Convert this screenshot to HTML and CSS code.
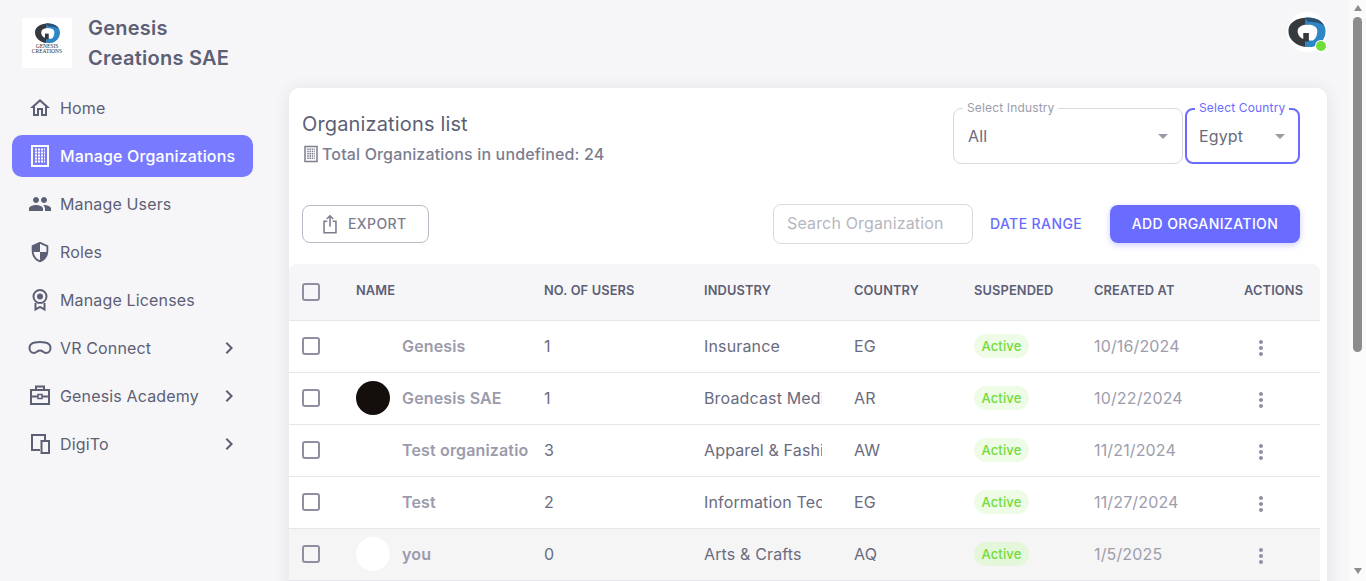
FILE: index.html
```html
<!DOCTYPE html>
<html lang="en">

<head>
    <meta charset="UTF-8">
    <meta name="viewport" content="width=device-width, initial-scale=1.0">
    <title>Manage Organizations</title>
    <link rel="stylesheet" href="styles.css">
</head>

<body>
    <!-- shared icons -->
    <svg class="defs" width="0" height="0">
        <symbol id="i-building" viewBox="0 0 24 24">
            <rect x="4" y="2" width="16" height="20" fill="none" stroke="currentColor" stroke-width="2" />
            <path d="M7 5.5h10M7 8.5h10M7 11.500h10M7 14.500h10M7 17.500h10" fill="none" stroke="currentColor"
                stroke-width="2" stroke-dasharray="2 1" />
        </symbol>
        <symbol id="i-chevron" viewBox="0 0 24 24">
            <path d="M10 6L8.59 7.41 13.17 12l-4.58 4.59L10 18l6-6z" fill="currentColor" />
        </symbol>
        <symbol id="i-more" viewBox="0 0 24 24">
            <path fill="currentColor"
                d="M12 8c1.100 0 2-.9 2-2s-.9-2-2-2-2 .9-2 2 .9 2 2 2zm0 2c-1.100 0-2 .9-2 2s.9 2 2 2 2-.9 2-2-.9-2-2-2zm0 6c-1.100 0-2 .9-2 2s.9 2 2 2 2-.9 2-2-.9-2-2-2z" />
        </symbol>
        <symbol id="i-logo" viewBox="0 0 40 32">
            <path d="M22 1C10 0 0 6 0 15c0 9 9 16 18 17l1-8c-5 0-9-4-9-9s6-7 12-7z" fill="#36393d" />
            <path d="M18 1c10-2 22 4 22 14 0 8-6 16-15 17h-7v-7h8c3-1 5-5 5-10 0-5-5-7-13-7z" fill="#2f86c6" />
            <path d="M17 1c8-1 18 1 21 8-5-3-10-4-17-4z" fill="#2c4f70" />
            <path d="M16 17h6v9h-6z" fill="#36393d" />
        </symbol>
    </svg>

    <div class="app">
        <aside class="sidebar">
            <div class="brand">
                <div class="brand-logo">
                    <svg class="brand-mark" viewBox="0 0 40 32">
                        <use href="#i-logo" />
                    </svg>
                    <span class="brand-small">Genesis<br>Creations</span>
                </div>
                <div class="brand-name">Genesis Creations SAE</div>
            </div>

            <nav class="nav">
                <a class="nav-item" href="#">
                    <svg class="icon" viewBox="0 0 24 24">
                        <path fill="currentColor"
                            d="M12 5.690l5 4.500V18h-2v-6H9v6H7v-7.810l5-4.500M12 3L2 12h3v8h6v-6h2v6h6v-8h3L12 3z" />
                    </svg>
                    Home
                </a>
                <a class="nav-item active" href="#">
                    <svg class="icon">
                        <use href="#i-building" />
                    </svg>
                    Manage Organizations
                </a>
                <a class="nav-item" href="#">
                    <svg class="icon" viewBox="0 0 24 24">
                        <path fill="currentColor"
                            d="M16 11c1.660 0 2.990-1.340 2.990-3S17.660 5 16 5c-1.660 0-3 1.340-3 3s1.340 3 3 3zm-8 0c1.660 0 2.990-1.340 2.990-3S9.660 5 8 5C6.340 5 5 6.340 5 8s1.340 3 3 3zm0 2c-2.330 0-7 1.170-7 3.500V19h14v-2.500c0-2.330-4.670-3.500-7-3.500zm8 0c-.29 0-.62.02-.97.05 1.160.84 1.970 1.970 1.970 3.450V19h6v-2.500c0-2.330-4.670-3.500-7-3.500z" />
                    </svg>
                    Manage Users
                </a>
                <a class="nav-item" href="#">
                    <svg class="icon" viewBox="-1 -1 26 26">
                        <path fill="currentColor" fill-rule="evenodd"
                            d="M12 1L3 5v6c0 5.550 3.840 10.740 9 12 5.160-1.260 9-6.450 9-12V5l-9-4zm0 2.190l7 3.110V12h-7V3.190zM5 12h7v8.930C8.280 19.780 5.530 16.110 5 12z" />
                    </svg>
                    Roles
                </a>
                <a class="nav-item" href="#">
                    <svg class="icon" viewBox="0 0 24 24">
                        <circle cx="12" cy="8.500" r="6.500" fill="none" stroke="currentColor" stroke-width="2" />
                        <circle cx="12" cy="8.500" r="3" fill="currentColor" />
                        <path d="M7.500 15v6.500l4.500-2.500 4.500 2.500V15" fill="none" stroke="currentColor" stroke-width="2" />
                    </svg>
                    Manage Licenses
                </a>
                <a class="nav-item" href="#">
                    <svg class="icon" viewBox="0 0 24 24">
                        <path d="M7 6.500c3-.6 7-.6 10 0 3.200.6 5.500 2.500 5.500 5.500 0 2.800-2 5-4.500 5-2.600 0-3.200-2.500-6-2.500s-3.400 2.500-6 2.500c-2.500 0-4.500-2.200-4.500-5 0-3 2.300-4.900 5.500-5.500z"
                            fill="none" stroke="currentColor" stroke-width="2" />
                    </svg>
                    VR Connect
                    <svg class="icon chevron">
                        <use href="#i-chevron" />
                    </svg>
                </a>
                <a class="nav-item" href="#">
                    <svg class="icon" viewBox="0 0 24 24">
                        <rect x="3" y="6" width="18" height="14" fill="none" stroke="currentColor" stroke-width="2" />
                        <path d="M8 6V2.500h8V6M3 12.500h18" fill="none" stroke="currentColor" stroke-width="2" />
                        <rect x="10" y="10.500" width="4" height="4" fill="#f6f6f9" stroke="currentColor" stroke-width="1.500" />
                    </svg>
                    Genesis Academy
                    <svg class="icon chevron">
                        <use href="#i-chevron" />
                    </svg>
                </a>
                <a class="nav-item" href="#">
                    <svg class="icon" viewBox="0 0 24 24">
                        <path d="M12 18H4V3h13v5" fill="none" stroke="currentColor" stroke-width="2" />
                        <rect x="13.500" y="9" width="7.500" height="12" fill="none" stroke="currentColor" stroke-width="2" />
                    </svg>
                    DigiTo
                    <svg class="icon chevron">
                        <use href="#i-chevron" />
                    </svg>
                </a>
            </nav>
        </aside>

        <main class="main">
            <div class="topbar">
                <div class="avatar-wrap">
                    <svg class="avatar-logo" viewBox="0 0 40 32">
                        <use href="#i-logo" />
                    </svg>
                    <span class="status-dot"></span>
                </div>
            </div>

            <section class="card">
                <div class="card-head">
                    <div>
                        <h1 class="card-title">Organizations list</h1>
                        <p class="card-sub">
                            <svg class="icon-small">
                                <use href="#i-building" />
                            </svg>
                            Total Organizations in undefined: 24
                        </p>
                    </div>
                    <div class="filters">
                        <div class="select select-industry">
                            <label class="select-label">Select Industry</label>
                            <span>All</span>
                            <i class="caret"></i>
                        </div>
                        <div class="select select-country">
                            <label class="select-label">Select Country</label>
                            <span>Egypt</span>
                            <i class="caret"></i>
                        </div>
                    </div>
                </div>

                <div class="toolbar">
                    <button class="btn-export">
                        <svg class="icon-export" viewBox="0 0 24 24">
                            <path d="M9 9H5.500v12.500h13V9H15M12 15V3M8.500 6.500L12 3l3.500 3.500" fill="none" stroke="currentColor" stroke-width="1.700" />
                        </svg>
                        EXPORT
                    </button>
                    <input class="search" type="text" placeholder="Search Organization">
                    <button class="btn-text">DATE RANGE</button>
                    <button class="btn-add">ADD ORGANIZATION</button>
                </div>

                <table class="table">
                    <thead>
                        <tr>
                            <th class="col-check"><input class="check" type="checkbox"></th>
                            <th class="col-name">NAME</th>
                            <th class="col-users">NO. OF USERS</th>
                            <th class="col-industry">INDUSTRY</th>
                            <th class="col-country">COUNTRY</th>
                            <th class="col-status">SUSPENDED</th>
                            <th class="col-date">CREATED AT</th>
                            <th>ACTIONS</th>
                        </tr>
                    </thead>
                    <tbody>
                        <tr>
                            <td><input class="check" type="checkbox"></td>
                            <td><div class="org"><span class="org-pic"></span><span class="org-name">Genesis</span></div></td>
                            <td>1</td>
                            <td><div class="clip">Insurance</div></td>
                            <td>EG</td>
                            <td><span class="chip">Active</span></td>
                            <td class="date">10/16/2024</td>
                            <td><svg class="more"><use href="#i-more" /></svg></td>
                        </tr>
                        <tr>
                            <td><input class="check" type="checkbox"></td>
                            <td><div class="org"><span class="org-pic pic-dark"></span><span class="org-name">Genesis SAE</span></div></td>
                            <td>1</td>
                            <td><div class="clip">Broadcast Media</div></td>
                            <td>AR</td>
                            <td><span class="chip">Active</span></td>
                            <td class="date">10/22/2024</td>
                            <td><svg class="more"><use href="#i-more" /></svg></td>
                        </tr>
                        <tr>
                            <td><input class="check" type="checkbox"></td>
                            <td><div class="org"><span class="org-pic"></span><span class="org-name">Test organization</span></div></td>
                            <td>3</td>
                            <td><div class="clip">Apparel &amp; Fashion</div></td>
                            <td>AW</td>
                            <td><span class="chip">Active</span></td>
                            <td class="date">11/21/2024</td>
                            <td><svg class="more"><use href="#i-more" /></svg></td>
                        </tr>
                        <tr>
                            <td><input class="check" type="checkbox"></td>
                            <td><div class="org"><span class="org-pic"></span><span class="org-name">Test</span></div></td>
                            <td>2</td>
                            <td><div class="clip">Information Technology</div></td>
                            <td>EG</td>
                            <td><span class="chip">Active</span></td>
                            <td class="date">11/27/2024</td>
                            <td><svg class="more"><use href="#i-more" /></svg></td>
                        </tr>
                        <tr class="hovered">
                            <td><input class="check" type="checkbox"></td>
                            <td><div class="org"><span class="org-pic pic-white"></span><span class="org-name">you</span></div></td>
                            <td>0</td>
                            <td><div class="clip">Arts &amp; Crafts</div></td>
                            <td>AQ</td>
                            <td><span class="chip">Active</span></td>
                            <td class="date">1/5/2025</td>
                            <td><svg class="more"><use href="#i-more" /></svg></td>
                        </tr>
                    </tbody>
                </table>
            </section>
        </main>

        <!-- page scrollbar -->
        <div class="scrollbar">
            <i class="arrow-up"></i>
            <div class="thumb"></div>
            <i class="arrow-down"></i>
        </div>
    </div>
</body>

</html>
```

FILE: styles.css
```css
* {
    box-sizing: border-box;
}

body {
    margin: 0;
    height: 100vh;
    overflow: hidden;
    background-color: #f6f6f9;
    color: #5d5f75;
    font-family: "Inter", "Liberation Sans", sans-serif;
    font-size: 16px;
    letter-spacing: 0.15px;
}

.defs {
    display: none;
}

.app {
    display: flex;
    height: 100%;
}

/* sidebar */
.sidebar {
    width: 265px;
    flex-shrink: 0;
}

.brand {
    display: flex;
    align-items: center;
    gap: 16px;
    padding: 13px 0 0 22px;
}

.brand-logo {
    width: 50px;
    height: 50px;
    flex-shrink: 0;
    background-color: #fff;
    display: flex;
    flex-direction: column;
    align-items: center;
    padding-top: 5px;
}

.brand-mark {
    width: 25px;
    height: 20px;
}

.brand-small {
    margin-top: 1px;
    font-family: "Liberation Serif", serif;
    font-size: 5.500px;
    letter-spacing: 0;
    line-height: 5px;
    text-align: center;
    text-transform: uppercase;
    color: #2c2c30;
}

.brand-name {
    width: 160px;
    font-size: 20px;
    font-weight: 600;
    letter-spacing: 0.25px;
    line-height: 30px;
}

.nav {
    display: flex;
    flex-direction: column;
    gap: 6px;
    margin: 14px 0 0 12px;
    width: 241px;
}

.nav-item {
    display: flex;
    align-items: center;
    gap: 8px;
    height: 42px;
    padding: 0 12px 0 16px;
    border-radius: 10px;
    color: #5d5f75;
    text-decoration: none;
}

.nav-item.active {
    background-color: #787bff;
    color: #fff;
    font-weight: 500;
}

.icon {
    width: 24px;
    height: 24px;
    flex-shrink: 0;
}

.chevron {
    margin-left: auto;
}

/* main */
.main {
    flex: 1;
    min-width: 0;
    padding-left: 24px;
    padding-right: 22px;
    overflow: hidden;
}

.topbar {
    display: flex;
    justify-content: flex-end;
    height: 88px;
    padding-top: 12px;
}

.avatar-wrap {
    position: relative;
    display: flex;
    align-items: center;
    justify-content: center;
    width: 40px;
    height: 40px;
    border-radius: 50%;
    background-color: #fff;
}

.avatar-logo {
    width: 38px;
    height: 30px;
}

.status-dot {
    position: absolute;
    right: 1px;
    bottom: 1px;
    width: 10px;
    height: 10px;
    border-radius: 50%;
    background-color: #71dd37;
    box-shadow: 0 0 0 1px #fff;
}

.card {
    background-color: #fff;
    border-radius: 10px;
    padding-top: 20px;
    padding-bottom: 40px;
    box-shadow: 0 2px 16px rgba(67, 67, 90, 0.12);
}

.card-head {
    display: flex;
    justify-content: space-between;
    padding: 0 27px 0 13px;
    height: 56px;
}

.card-title {
    margin: 0;
    font-size: 20px;
    font-weight: 400;
    line-height: 32px;
}

.card-sub {
    margin: 4px 0 0;
    display: flex;
    align-items: center;
    gap: 2px;
    font-weight: 500;
    line-height: 20px;
    color: #7c7d8f;
}

.icon-small {
    width: 18px;
    height: 18px;
}

.filters {
    display: flex;
    gap: 2px;
}

.select {
    position: relative;
    display: flex;
    align-items: center;
    justify-content: space-between;
    height: 56px;
    padding: 0 14px;
    border: 1px solid #d9d9de;
    border-radius: 8px;
    color: #6a6b7e;
}

.select-industry {
    width: 230px;
}

.select-country {
    width: 115px;
    border: 2px solid #696cff;
    padding: 0 13px 0 12px;
}

.select-label {
    position: absolute;
    top: -9px;
    left: 9px;
    padding: 0 4px;
    background-color: #fff;
    font-size: 12px;
    line-height: 15px;
    color: #9c9cab;
}

.select-country .select-label {
    left: 8px;
    top: -10px;
    color: #696cff;
}

.caret {
    width: 0;
    height: 0;
    border-left: 5px solid transparent;
    border-right: 5px solid transparent;
    border-top: 5px solid #9a9aa8;
}

.toolbar {
    display: flex;
    align-items: center;
    height: 40px;
    margin-top: 40px;
    padding: 0 27px 0 13px;
}

.toolbar button {
    font-family: inherit;
    font-size: 14px;
    font-weight: 500;
    letter-spacing: 0.4px;
    line-height: 16px;
    padding-bottom: 1px;
    cursor: pointer;
}

.btn-export {
    display: flex;
    align-items: center;
    gap: 7px;
    width: 127px;
    height: 38px;
    padding: 0 0 0 16px;
    background: none;
    border: 1px solid #b9b9c6;
    border-radius: 8px;
    color: #7c7d8f;
}

.icon-export {
    width: 22px;
    height: 22px;
}

.search {
    width: 200px;
    height: 40px;
    margin-left: auto;
    padding: 0 14px 2px 13px;
    border: 1px solid #d9d9de;
    border-radius: 8px;
    font-family: inherit;
    font-size: 16px;
    letter-spacing: 0.15px;
}

.search::placeholder {
    color: #b6b6c1;
}

.btn-text {
    width: 91px;
    margin-left: 17px;
    padding: 0;
    background: none;
    border: none;
    color: #696cff;
    white-space: nowrap;
}

.btn-add {
    width: 190px;
    height: 38px;
    margin-left: 29px;
    background-color: #696cff;
    border: none;
    border-radius: 8px;
    color: #fff;
    box-shadow: 0 2px 6px rgba(105, 108, 255, 0.35);
}

/* table */
.table {
    width: 1031px;
    margin-top: 20px;
    table-layout: fixed;
    border-collapse: collapse;
}

.table thead tr {
    height: 56px;
    background-color: #f6f6f9;
}

.table th {
    padding: 0 0 3px;
    font-size: 12.800px;
    font-weight: 600;
    text-align: left;
    color: #5d5f75;
    border-bottom: 1px solid #e6e6ea;
}

.table th:first-child {
    border-top-left-radius: 8px;
    padding-bottom: 0;
}

.table th:last-child {
    border-top-right-radius: 8px;
}

.table tbody tr {
    height: 52px;
}

.table td {
    padding: 0;
    color: #6a6b7e;
    border-bottom: 1px solid #e6e6ea;
}

.table tr.hovered {
    background-color: #f5f5f5;
}

.col-check {
    width: 67px;
}

.col-name {
    width: 188px;
}

.col-users {
    width: 160px;
}

.col-industry {
    width: 150px;
}

.col-country {
    width: 120px;
}

.col-status {
    width: 120px;
}

.col-date {
    width: 150px;
}

.check {
    display: block;
    appearance: none;
    width: 18px;
    height: 18px;
    margin: 0 0 0 13px;
    border: 2px solid #8f8fa1;
    border-radius: 3px;
    background: none;
}

.org {
    display: flex;
    align-items: center;
    gap: 12px;
    width: 172px;
    overflow: hidden;
}

.org-pic {
    width: 34px;
    height: 34px;
    flex-shrink: 0;
    border-radius: 50%;
}

.pic-dark {
    background-color: #140f0d;
}

.pic-white {
    background-color: #fff;
}

.org-name {
    font-weight: 600;
    white-space: nowrap;
    color: #9b9bac;
}

.clip {
    width: 118px;
    overflow: hidden;
    white-space: nowrap;
}

.chip {
    display: inline-block;
    width: 55px;
    padding: 0;
    border-radius: 12px;
    background-color: #eefbe7;
    font-size: 13px;
    font-weight: 500;
    line-height: 24px;
    text-align: center;
    color: #71dd37;
    vertical-align: middle;
}

.hovered .chip {
    background-color: #e5f7db;
}

.date {
    color: #9d9dac !important;
}

.more {
    display: block;
    width: 24px;
    height: 24px;
    margin: 3px 0 0 5px;
    color: #8f8fa1;
}

/* scrollbar */
.scrollbar {
    width: 17px;
    flex-shrink: 0;
    display: flex;
    flex-direction: column;
    align-items: center;
    background-color: #fafafa;
    padding-top: 5px;
}

.arrow-up,
.arrow-down {
    width: 0;
    height: 0;
    border-left: 4px solid transparent;
    border-right: 4px solid transparent;
}

.arrow-up {
    border-bottom: 6px solid #8c8c8c;
}

.arrow-down {
    margin-top: 216px;
    border-top: 6px solid #8c8c8c;
}

.thumb {
    width: 9px;
    height: 335px;
    margin-top: 6px;
    border-radius: 5px;
    background-color: #8c8c8c;
}
```
